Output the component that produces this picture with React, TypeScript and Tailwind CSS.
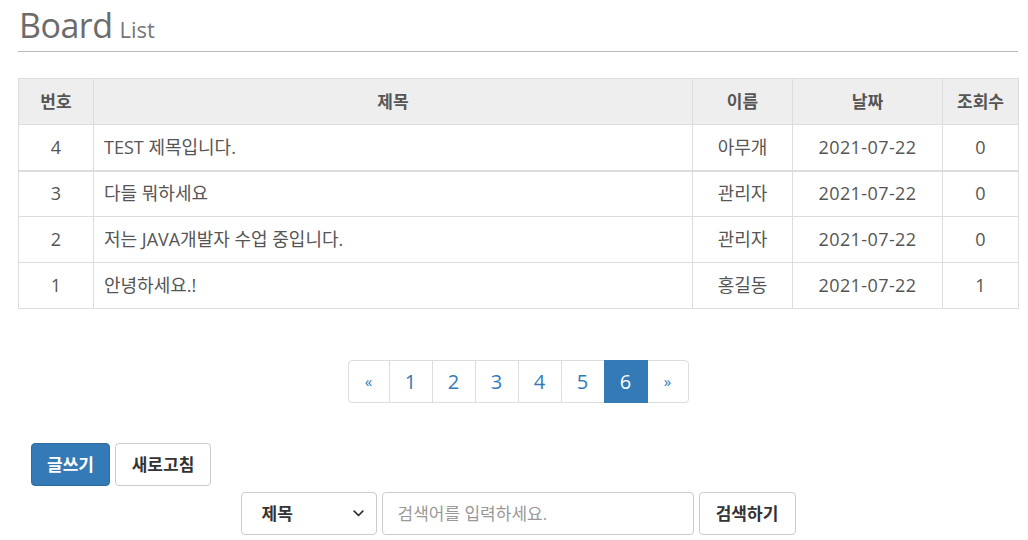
import React from 'react';

const rows = [
  { no: 4, title: 'TEST 제목입니다.', name: '아무개', date: '2021-07-22', hit: 0 },
  { no: 3, title: '다들 뭐하세요', name: '관리자', date: '2021-07-22', hit: 0 },
  { no: 2, title: '저는 JAVA개발자 수업 중입니다.', name: '관리자', date: '2021-07-22', hit: 0 },
  { no: 1, title: '안녕하세요.!', name: '홍길동', date: '2021-07-22', hit: 1 },
];

const pages = ['«', '1', '2', '3', '4', '5', '6', '»'];

const App: React.FC = () => {
  return (
    <div
      className="w-[1028px] h-[540px] bg-white overflow-hidden text-[#555]"
      style={{ fontFamily: '"Open Sans", "Noto Sans CJK KR", sans-serif' }}
    >
      <div className="ml-[18px] w-[1000px]">
        {/* header */}
        <div className="pl-[1px] pt-[5px] pb-[5px] border-b border-[#bbb] flex items-baseline gap-[7px]">
          <span className="text-[34px] leading-[40px] text-[#6b6b6b] tracking-[-0.5px]">Board</span>
          <span className="text-[22px] text-[#777]">List</span>
        </div>

        {/* table */}
        <table className="mt-[26px] w-[1000px] table-fixed border-collapse text-[18px]">
          <colgroup>
            <col className="w-[75px]" />
            <col className="w-[599px]" />
            <col className="w-[100px]" />
            <col className="w-[150px]" />
            <col className="w-[76px]" />
          </colgroup>
          <thead>
            <tr className="bg-[#eee] h-[46px] text-[17px] font-bold">
              <th className="border border-[#ddd] text-center">번호</th>
              <th className="border border-[#ddd] text-center">제목</th>
              <th className="border border-[#ddd] text-center">이름</th>
              <th className="border border-[#ddd] text-center">날짜</th>
              <th className="border border-[#ddd] text-center">조회수</th>
            </tr>
          </thead>
          <tbody>
            {rows.map((r, i) => (
              <tr key={r.no} className={`h-[46px] ${i === 1 ? 'border-t-2 border-t-[#ddd]' : ''}`}>
                <td className="border border-[#ddd] text-center">{r.no}</td>
                <td className="border border-[#ddd] pl-[10px]">{r.title}</td>
                <td className="border border-[#ddd] text-center">{r.name}</td>
                <td className="border border-[#ddd] text-center tracking-[0.4px]">{r.date}</td>
                <td className="border border-[#ddd] text-center">{r.hit}</td>
              </tr>
            ))}
          </tbody>
        </table>

        {/* pagination */}
        <div className="mt-[51px] flex justify-center">
          <ul className="flex">
            {pages.map((p) => {
              const active = p === '6';
              const arrow = p === '«' || p === '»';
              return (
                <li
                  key={p}
                  className={`h-[43px] flex items-center justify-center border -ml-px first:ml-0 first:rounded-l-[4px] last:rounded-r-[4px] ${
                    arrow ? 'w-[42px] text-[15px] text-[#337ab7]' : 'w-[44px] text-[20px]'
                  } ${active ? 'bg-[#337ab7] border-[#337ab7] text-white z-10' : 'border-[#ddd] text-[#337ab7] bg-white'}`}
                >
                  {p}
                </li>
              );
            })}
          </ul>
        </div>

        {/* buttons */}
        <div className="mt-[40px] ml-[13px] flex gap-[5px]">
          <button className="w-[79px] h-[43px] rounded-[4px] bg-[#337ab7] border border-[#2e6da4] text-white font-bold text-[17px]">
            글쓰기
          </button>
          <button className="w-[96px] h-[43px] rounded-[4px] bg-white border border-[#ccc] text-[#333] font-bold text-[17px]">
            새로고침
          </button>
        </div>

        {/* search */}
        <div className="mt-[6px] flex justify-center gap-[5px]">
          <div className="w-[136px] h-[43px] rounded-[4px] border border-[#ccc] flex items-center justify-between pl-[20px] pr-[12px] text-[17px] font-bold text-[#333]">
            <span>제목</span>
            <svg width="11" height="7" viewBox="0 0 11 7" fill="none">
              <path d="M1.2 1.2 L5.5 5.5 L9.8 1.2" stroke="#333" strokeWidth="1.7" strokeLinecap="round" strokeLinejoin="round" />
            </svg>
          </div>
          <input
            className="w-[312px] h-[43px] rounded-[4px] border border-[#ccc] px-[15px] text-[17px] outline-none placeholder:text-[#999]"
            placeholder="검색어를 입력하세요."
          />
          <button className="w-[97px] h-[43px] rounded-[4px] bg-white border border-[#ccc] text-[#333] font-bold text-[17px]">
            검색하기
          </button>
        </div>
      </div>
    </div>
  );
};

export default App;
